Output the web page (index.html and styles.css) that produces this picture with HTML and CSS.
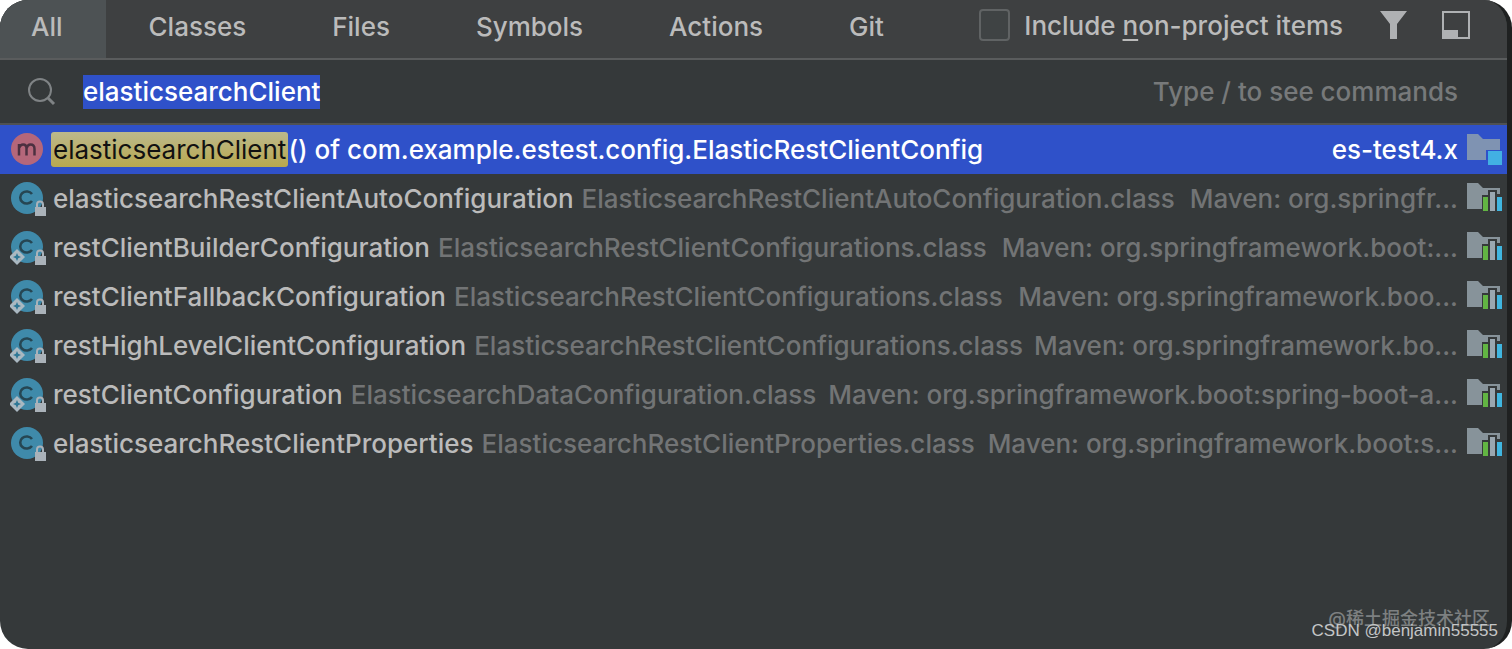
FILE: index.html
```html
<!DOCTYPE html>
<html lang="en">
<head>
    <meta charset="UTF-8">
    <meta name="viewport" content="width=device-width, initial-scale=1.0">
    <title>Search Everywhere</title>
    <link rel="stylesheet" href="styles.css">
</head>
<body>
    <!-- shared icons -->
    <svg class="sprite" aria-hidden="true">
        <symbol id="icon-method" viewBox="0 0 36 36">
            <circle cx="17" cy="17" r="16" fill="#b5677a"/>
            <path d="M9 23.500V12M9 16Q10.500 12.500 13 12.500Q16.500 12.500 16.500 16.500V23.500M16.500 16.500Q17.500 12.500 20.500 12.500Q24.500 12.500 24.500 17V23.500" fill="none" stroke="#4c3040" stroke-width="2.500"/>
        </symbol>
        <symbol id="icon-class" viewBox="0 0 36 36">
            <circle cx="17" cy="17" r="16" fill="#3f8aaa"/>
            <path d="M22 13A6.500 6 0 1 0 22 20" fill="none" stroke="#264653" stroke-width="2.600"/>
            <path d="M27 27V23.500a3 3 0 0 1 6 0V27" fill="none" stroke="#aab2b9" stroke-width="2"/>
            <rect x="25" y="26" width="11" height="9" fill="#aab2b9"/>
        </symbol>
        <symbol id="icon-bean" viewBox="0 0 36 36">
            <use href="#icon-class"/>
            <path d="M7 19L15 27L7 35L-1 27Z" fill="#aab8c1"/>
            <path d="M7 23L8.200 25.800L11 27L8.200 28.200L7 31L5.800 28.200L3 27L5.800 25.800Z" fill="#2f7896"/>
        </symbol>
        <symbol id="icon-module" viewBox="0 0 36 34">
            <path d="M0 1H11L16 6H33V17H19V27H0Z" fill="#7f93b2"/>
            <rect x="21" y="18" width="14" height="14" fill="#42b0e3"/>
        </symbol>
        <symbol id="icon-library" viewBox="0 0 36 34">
            <path d="M0 1H11L16 6H33V12H30V8H21V13H15V27H0Z" fill="#87939a"/>
            <rect x="16" y="15" width="5" height="14" fill="#62b543"/>
            <rect x="23" y="10" width="5" height="19" fill="#9aa7b0"/>
            <rect x="30" y="15" width="5" height="14" fill="#40b6e0"/>
        </symbol>
    </svg>

    <main class="popup">
        <header class="tabs">
            <button class="tab active" type="button">All</button>
            <button class="tab" type="button">Classes</button>
            <button class="tab" type="button">Files</button>
            <button class="tab" type="button">Symbols</button>
            <button class="tab" type="button">Actions</button>
            <button class="tab" type="button">Git</button>
            <div class="tools">
                <label class="include" for="nonProject">
                    <input class="checkbox" type="checkbox" id="nonProject">
                    <span>Include <u>n</u>on-project items</span>
                </label>
                <button class="tool" type="button" aria-label="Filter">
                    <svg width="28" height="30" viewBox="0 0 28 30"><path d="M0 1H27L17 14V29H10V14Z" fill="#afb1b3"/></svg>
                </button>
                <button class="tool" type="button" aria-label="Open in tool window">
                    <svg width="28" height="30" viewBox="0 0 28 30"><path d="M1 2H27V28H1Z" fill="none" stroke="#afb1b3" stroke-width="2"/><path d="M2 20H16V28H2Z" fill="#afb1b3"/></svg>
                </button>
            </div>
        </header>

        <div class="search">
            <svg class="search-icon" width="28" height="28" viewBox="0 0 28 28"><circle cx="12" cy="12" r="11" fill="none" stroke="#7f8385" stroke-width="2"/><path d="M19.500 19.500L26 26" stroke="#7f8385" stroke-width="3"/></svg>
            <input class="query" id="query" type="text" value="elasticsearchClient" aria-label="Search everywhere" spellcheck="false" autocomplete="off">
            <span class="hint">Type / to see commands</span>
        </div>

        <ul class="results">
            <li class="row selected">
                <svg class="kind"><use href="#icon-method"/></svg>
                <span class="name"><mark>elasticsearchClient</mark>() of com.example.estest.config.ElasticRestClientConfig</span>
                <span class="module">es-test4.x</span>
                <svg class="source"><use href="#icon-module"/></svg>
            </li>
            <li class="row">
                <svg class="kind"><use href="#icon-class"/></svg>
                <span class="name">elasticsearchRestClientAutoConfiguration</span>
                <span class="file">ElasticsearchRestClientAutoConfiguration.class</span>
                <span class="module">Maven: org.springfr...</span>
                <svg class="source"><use href="#icon-library"/></svg>
            </li>
            <li class="row">
                <svg class="kind"><use href="#icon-bean"/></svg>
                <span class="name">restClientBuilderConfiguration</span>
                <span class="file">ElasticsearchRestClientConfigurations.class</span>
                <span class="module">Maven: org.springframework.boot:...</span>
                <svg class="source"><use href="#icon-library"/></svg>
            </li>
            <li class="row">
                <svg class="kind"><use href="#icon-bean"/></svg>
                <span class="name">restClientFallbackConfiguration</span>
                <span class="file">ElasticsearchRestClientConfigurations.class</span>
                <span class="module">Maven: org.springframework.boo...</span>
                <svg class="source"><use href="#icon-library"/></svg>
            </li>
            <li class="row">
                <svg class="kind"><use href="#icon-bean"/></svg>
                <span class="name">restHighLevelClientConfiguration</span>
                <span class="file">ElasticsearchRestClientConfigurations.class</span>
                <span class="module">Maven: org.springframework.bo...</span>
                <svg class="source"><use href="#icon-library"/></svg>
            </li>
            <li class="row">
                <svg class="kind"><use href="#icon-bean"/></svg>
                <span class="name">restClientConfiguration</span>
                <span class="file">ElasticsearchDataConfiguration.class</span>
                <span class="module">Maven: org.springframework.boot:spring-boot-a...</span>
                <svg class="source"><use href="#icon-library"/></svg>
            </li>
            <li class="row">
                <svg class="kind"><use href="#icon-class"/></svg>
                <span class="name">elasticsearchRestClientProperties</span>
                <span class="file">ElasticsearchRestClientProperties.class</span>
                <span class="module">Maven: org.springframework.boot:s...</span>
                <svg class="source"><use href="#icon-library"/></svg>
            </li>
        </ul>

        <div class="watermark">
            <span class="watermark-site">@稀土掘金技术社区</span>
            <span class="watermark-user">CSDN @benjamin55555</span>
        </div>
    </main>

    <script>
        const query = document.getElementById('query');
        query.focus();
        query.select();
    </script>
</body>
</html>
```

FILE: styles.css
```css
* {
    box-sizing: border-box;
}
body {
    margin: 0;
    background: #ffffff;
    font-family: Inter, "Noto Sans CJK SC", sans-serif;
    font-size: 26px;
    font-weight: 450;
    color: #bbbbbb;
}
button, input {
    font: inherit;
    color: inherit;
}
.sprite {
    display: none;
}
.popup {
    position: relative;
    display: flex;
    flex-direction: column;
    min-height: 100vh;
    background: #35393a;
    border-right: 5px solid #1f2121;
    border-radius: 28px;
    overflow: hidden;
}
.tabs {
    display: flex;
    height: 60px;
    background: #3e4041;
    border-bottom: 2px solid #5a5c5d;
}
.tab {
    padding: 0 43px 5px;
    border: none;
    background: none;
}
.tab.active {
    padding: 0 43px 5px 31px;
    background: #4d5254;
}
.tools {
    display: flex;
    align-items: center;
    gap: 24px;
    margin-left: auto;
    padding: 0 32px 8px 0;
}
.include {
    display: flex;
    align-items: center;
    gap: 14px;
    margin-right: 8px;
    white-space: nowrap;
    font-weight: 500;
}
.include u {
    text-decoration-thickness: 2px;
    text-underline-offset: 4px;
}
.checkbox {
    appearance: none;
    width: 31px;
    height: 32px;
    margin: 0;
    border: 2px solid #606364;
    border-radius: 4px;
    background: #3f4344;
}
.tool {
    display: flex;
    padding: 0 5px;
    border: none;
    background: none;
}
.search {
    display: flex;
    align-items: center;
    height: 65px;
    padding: 0 49px 0 28px;
    border-bottom: 2px solid #4f5152;
}
.query {
    flex: 1;
    min-width: 0;
    height: 34px;
    margin-left: 27px;
    padding: 0;
    border: none;
    outline: none;
    background: none;
    line-height: 34px;
    font-weight: 500;
    caret-color: transparent;
}
.query::selection {
    background: #2f51c9;
    color: #ffffff;
}
.hint {
    color: #77797a;
}
.results {
    margin: 0;
    padding: 0;
    list-style: none;
}
.row {
    display: flex;
    align-items: center;
    height: 49px;
    padding: 0 4px 0 10px;
    white-space: nowrap;
}
.kind {
    flex: none;
    width: 36px;
    height: 36px;
    margin-right: 7px;
    overflow: visible;
}
.source {
    flex: none;
    width: 36px;
    height: 34px;
    margin-left: 9px;
}
.name {
    font-weight: 500;
}
.file {
    margin-left: 8px;
    color: #727475;
}
.module {
    margin-left: auto;
    color: #727475;
}
.row.selected, .selected .module {
    background: #2f51c9;
    color: #ffffff;
    font-weight: 500;
}
mark {
    margin-left: -2px;
    padding: 2px;
    border-radius: 3px;
    background: linear-gradient(#bcb98c, #b8a84e);
    color: #111111;
    font-weight: 400;
}
.watermark {
    position: absolute;
    right: 9px;
    bottom: 8px;
    display: flex;
    flex-direction: column;
    align-items: flex-end;
    font-size: 17px;
    line-height: 20px;
    color: #c4c6c7;
}
.watermark-site {
    margin: 0 8px -8px 0;
    font-size: 18px;
    color: #7d8081;
}
.watermark-user {
    font-family: "Liberation Sans", sans-serif;
}
```
